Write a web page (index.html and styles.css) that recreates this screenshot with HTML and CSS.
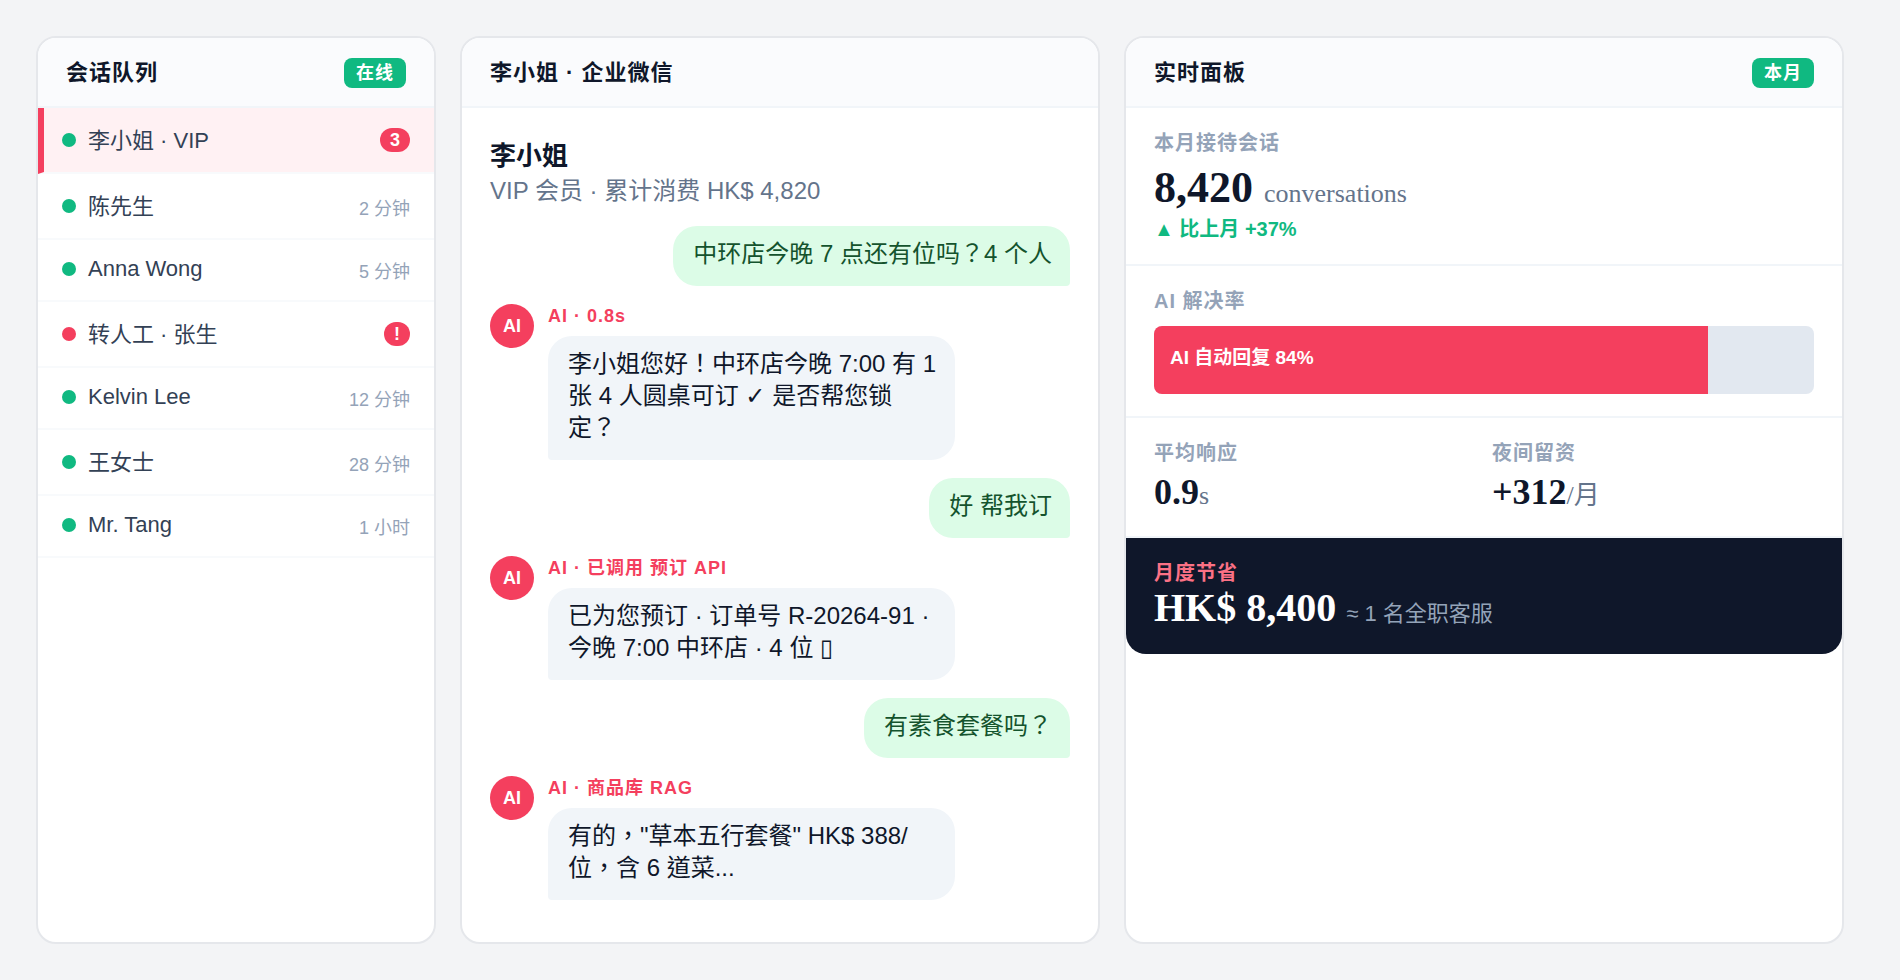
FILE: index.html
```
<!DOCTYPE html>
<html lang="zh-CN">
<head>
	<meta charset="utf-8">
	<title>客服工作台</title>
	<link rel="stylesheet" href="styles.css">
</head>
<body>
	<main class="desk">
		<section class="card">
			<header class="card-head">
				<h2>会话队列</h2>
				<span class="tag">在线</span>
			</header>
			<ul class="queue">
				<li class="tall active"><i class="dot"></i><span class="name">李小姐 · VIP</span><b class="badge">3</b></li>
				<li class="tall"><i class="dot"></i><span class="name">陈先生</span><span class="time">2 分钟</span></li>
				<li><i class="dot"></i><span class="name">Anna Wong</span><span class="time">5 分钟</span></li>
				<li class="tall"><i class="dot red"></i><span class="name">转人工 · 张生</span><b class="badge">!</b></li>
				<li><i class="dot"></i><span class="name">Kelvin Lee</span><span class="time">12 分钟</span></li>
				<li class="tall"><i class="dot"></i><span class="name">王女士</span><span class="time">28 分钟</span></li>
				<li><i class="dot"></i><span class="name">Mr. Tang</span><span class="time">1 小时</span></li>
			</ul>
		</section>

		<section class="card">
			<header class="card-head">
				<h2>李小姐 · 企业微信</h2>
			</header>
			<div class="chat" lang="zh-TW">
				<div class="customer">
					<h3>李小姐</h3>
					<p>VIP 会员 · 累计消费 HK$ 4,820</p>
				</div>
				<p class="bubble mine">中环店今晚 7 点还有位吗？4 个人</p>
				<div class="reply">
					<span class="avatar">AI</span>
					<div class="reply-body">
						<div class="from">AI · 0.8s</div>
						<p class="bubble">李小姐您好！中环店今晚 7:00 有 1 张 4 人圆桌可订 ✓ 是否帮您锁定？</p>
					</div>
				</div>
				<p class="bubble mine">好 帮我订</p>
				<div class="reply">
					<span class="avatar">AI</span>
					<div class="reply-body">
						<div class="from">AI · 已调用 预订 API</div>
						<p class="bubble">已为您预订 · 订单号 R-20264-91 · 今晚 7:00 中环店 · 4 位 ▯</p>
					</div>
				</div>
				<p class="bubble mine">有素食套餐吗？</p>
				<div class="reply">
					<span class="avatar">AI</span>
					<div class="reply-body">
						<div class="from">AI · 商品库 RAG</div>
						<p class="bubble">有的，"草本五行套餐" HK$ 388/位，含 6 道菜...</p>
					</div>
				</div>
			</div>
		</section>

		<section class="card">
			<header class="card-head">
				<h2>实时面板</h2>
				<span class="tag">本月</span>
			</header>
			<div class="stat">
				<div class="label">本月接待会话</div>
				<div class="num">8,420 <small>conversations</small></div>
				<div class="delta">▲ 比上月 +37%</div>
			</div>
			<div class="stat">
				<div class="label">AI 解决率</div>
				<div class="bar"><div class="fill" style="width: 84%">AI 自动回复 84%</div></div>
			</div>
			<div class="stat pair">
				<div>
					<div class="label">平均响应</div>
					<div class="num mid">0.9<small>s</small></div>
				</div>
				<div>
					<div class="label">夜间留资</div>
					<div class="num mid">+312<small>/月</small></div>
				</div>
			</div>
			<div class="saving">
				<div class="label">月度节省</div>
				<div class="num">HK$ 8,400 <small>≈ 1 名全职客服</small></div>
			</div>
		</section>
	</main>
</body>
</html>
```
FILE: styles.css
```
*{
	margin: 0;
	padding: 0;
	box-sizing: border-box;
}
body{
	background: #f3f4f6;
	color: #0f172a;
	font-family: "Liberation Sans", "DejaVu Sans", "Noto Sans CJK SC", sans-serif;
}
ul{
	list-style: none;
}
.desk{
	display: grid;
	grid-template-columns: 10fr 16fr 18fr;
	gap: 24px;
	min-height: 100vh;
	padding: 36px 56px 36px 36px;
}
.card{
	min-width: 0;
	background: white;
	border: 2px solid #e5e7eb;
	border-radius: 20px;
	overflow: hidden;
}
.card-head{
	display: flex;
	align-items: center;
	justify-content: space-between;
	height: 70px;
	padding: 2px 28px 0;
	background: #fafbfd;
	border-bottom: 2px solid #f1f5f9;
}
.card-head h2{
	font-size: 22px;
	letter-spacing: 1px;
	line-height: 30px;
}
.tag{
	padding: 0 12px;
	border-radius: 8px;
	background: #10b981;
	color: white;
	font-size: 18px;
	font-weight: bold;
	letter-spacing: 1px;
	line-height: 30px;
}

/* 会话队列 */
.queue li{
	display: flex;
	align-items: center;
	gap: 12px;
	height: 62px;
	padding: 0 24px 2px;
	border-bottom: 2px solid #f8fafc;
}
.queue .tall{
	height: 66px;
	padding-bottom: 0;
}
.queue .active{
	padding-left: 18px;
	border-left: 6px solid #f43f5e;
	background: #fff1f3;
}
.dot{
	width: 14px;
	height: 14px;
	border-radius: 50%;
	background: #10b981;
}
.dot.red{
	background: #f43f5e;
}
.name{
	flex: 1;
	color: #334155;
	font-size: 22px;
	line-height: 28px;
}
.tall .name{
	padding-top: 2px;
}
.time{
	padding-top: 6px;
	color: #94a3b8;
	font-size: 18px;
	line-height: 24px;
}
.badge{
	padding: 0 10px;
	border-radius: 12px;
	background: #f43f5e;
	color: white;
	font-size: 18px;
	line-height: 24px;
}

/* 对话 */
.chat{
	display: flex;
	flex-direction: column;
	gap: 18px;
	padding: 30px 28px 28px;
	font-family: "Liberation Sans", "DejaVu Sans", "Noto Sans CJK TC", sans-serif;
}
.customer h3{
	font-size: 26px;
	line-height: 36px;
}
.customer p{
	color: #64748b;
	font-size: 24px;
	line-height: 34px;
}
.bubble{
	max-width: 78%;
	padding: 12px 18px 16px 20px;
	border-radius: 24px 24px 24px 4px;
	background: #f1f5f9;
	font-size: 24px;
	line-height: 32px;
}
.mine{
	align-self: flex-end;
	border-radius: 24px 24px 4px 24px;
	background: #dcfce7;
	color: #14532d;
}
.reply{
	display: flex;
	gap: 14px;
}
.reply-body{
	flex: 1;
}
.avatar{
	width: 44px;
	height: 44px;
	border-radius: 50%;
	background: #f43f5e;
	color: white;
	font-size: 18px;
	font-weight: bold;
	line-height: 44px;
	text-align: center;
}
.from{
	margin-bottom: 8px;
	color: #f43f5e;
	font-size: 18px;
	font-weight: bold;
	letter-spacing: 1px;
	line-height: 24px;
}

/* 实时面板 */
.stat{
	padding: 20px 28px;
	border-bottom: 2px solid #f1f5f9;
}
.label{
	margin-bottom: 4px;
	color: #94a3b8;
	font-size: 20px;
	font-weight: bold;
	letter-spacing: 1px;
	line-height: 30px;
}
.num{
	font-family: "Liberation Serif", "Noto Sans CJK SC", serif;
	font-size: 44px;
	font-weight: bold;
	line-height: 52px;
}
.num small{
	color: #64748b;
	font-size: 26px;
	font-weight: normal;
	line-height: 1;
}
.num.mid{
	margin-bottom: 4px;
	font-size: 36px;
	line-height: 40px;
}
.delta{
	color: #10b981;
	font-size: 20px;
	font-weight: bold;
	line-height: 30px;
}
.bar{
	height: 68px;
	margin: 10px 0 2px;
	border-radius: 8px;
	background: #e2e8f0;
	overflow: hidden;
}
.fill{
	height: 100%;
	padding: 0 16px;
	background: #f43f5e;
	color: white;
	font-size: 19px;
	font-weight: bold;
	line-height: 64px;
}
.pair{
	display: grid;
	grid-template-columns: 1fr 1fr;
	gap: 16px;
}
.saving{
	padding: 20px 28px 26px;
	border-radius: 0 0 20px 20px;
	background: #0f172a;
	color: white;
}
.saving .label{
	margin-bottom: 0;
	color: #fb7185;
}
.saving .num{
	font-size: 40px;
	line-height: 40px;
}
.saving small{
	color: #94a3b8;
	font-family: "Liberation Sans", "Noto Sans CJK SC", sans-serif;
	font-size: 22px;
}
```
